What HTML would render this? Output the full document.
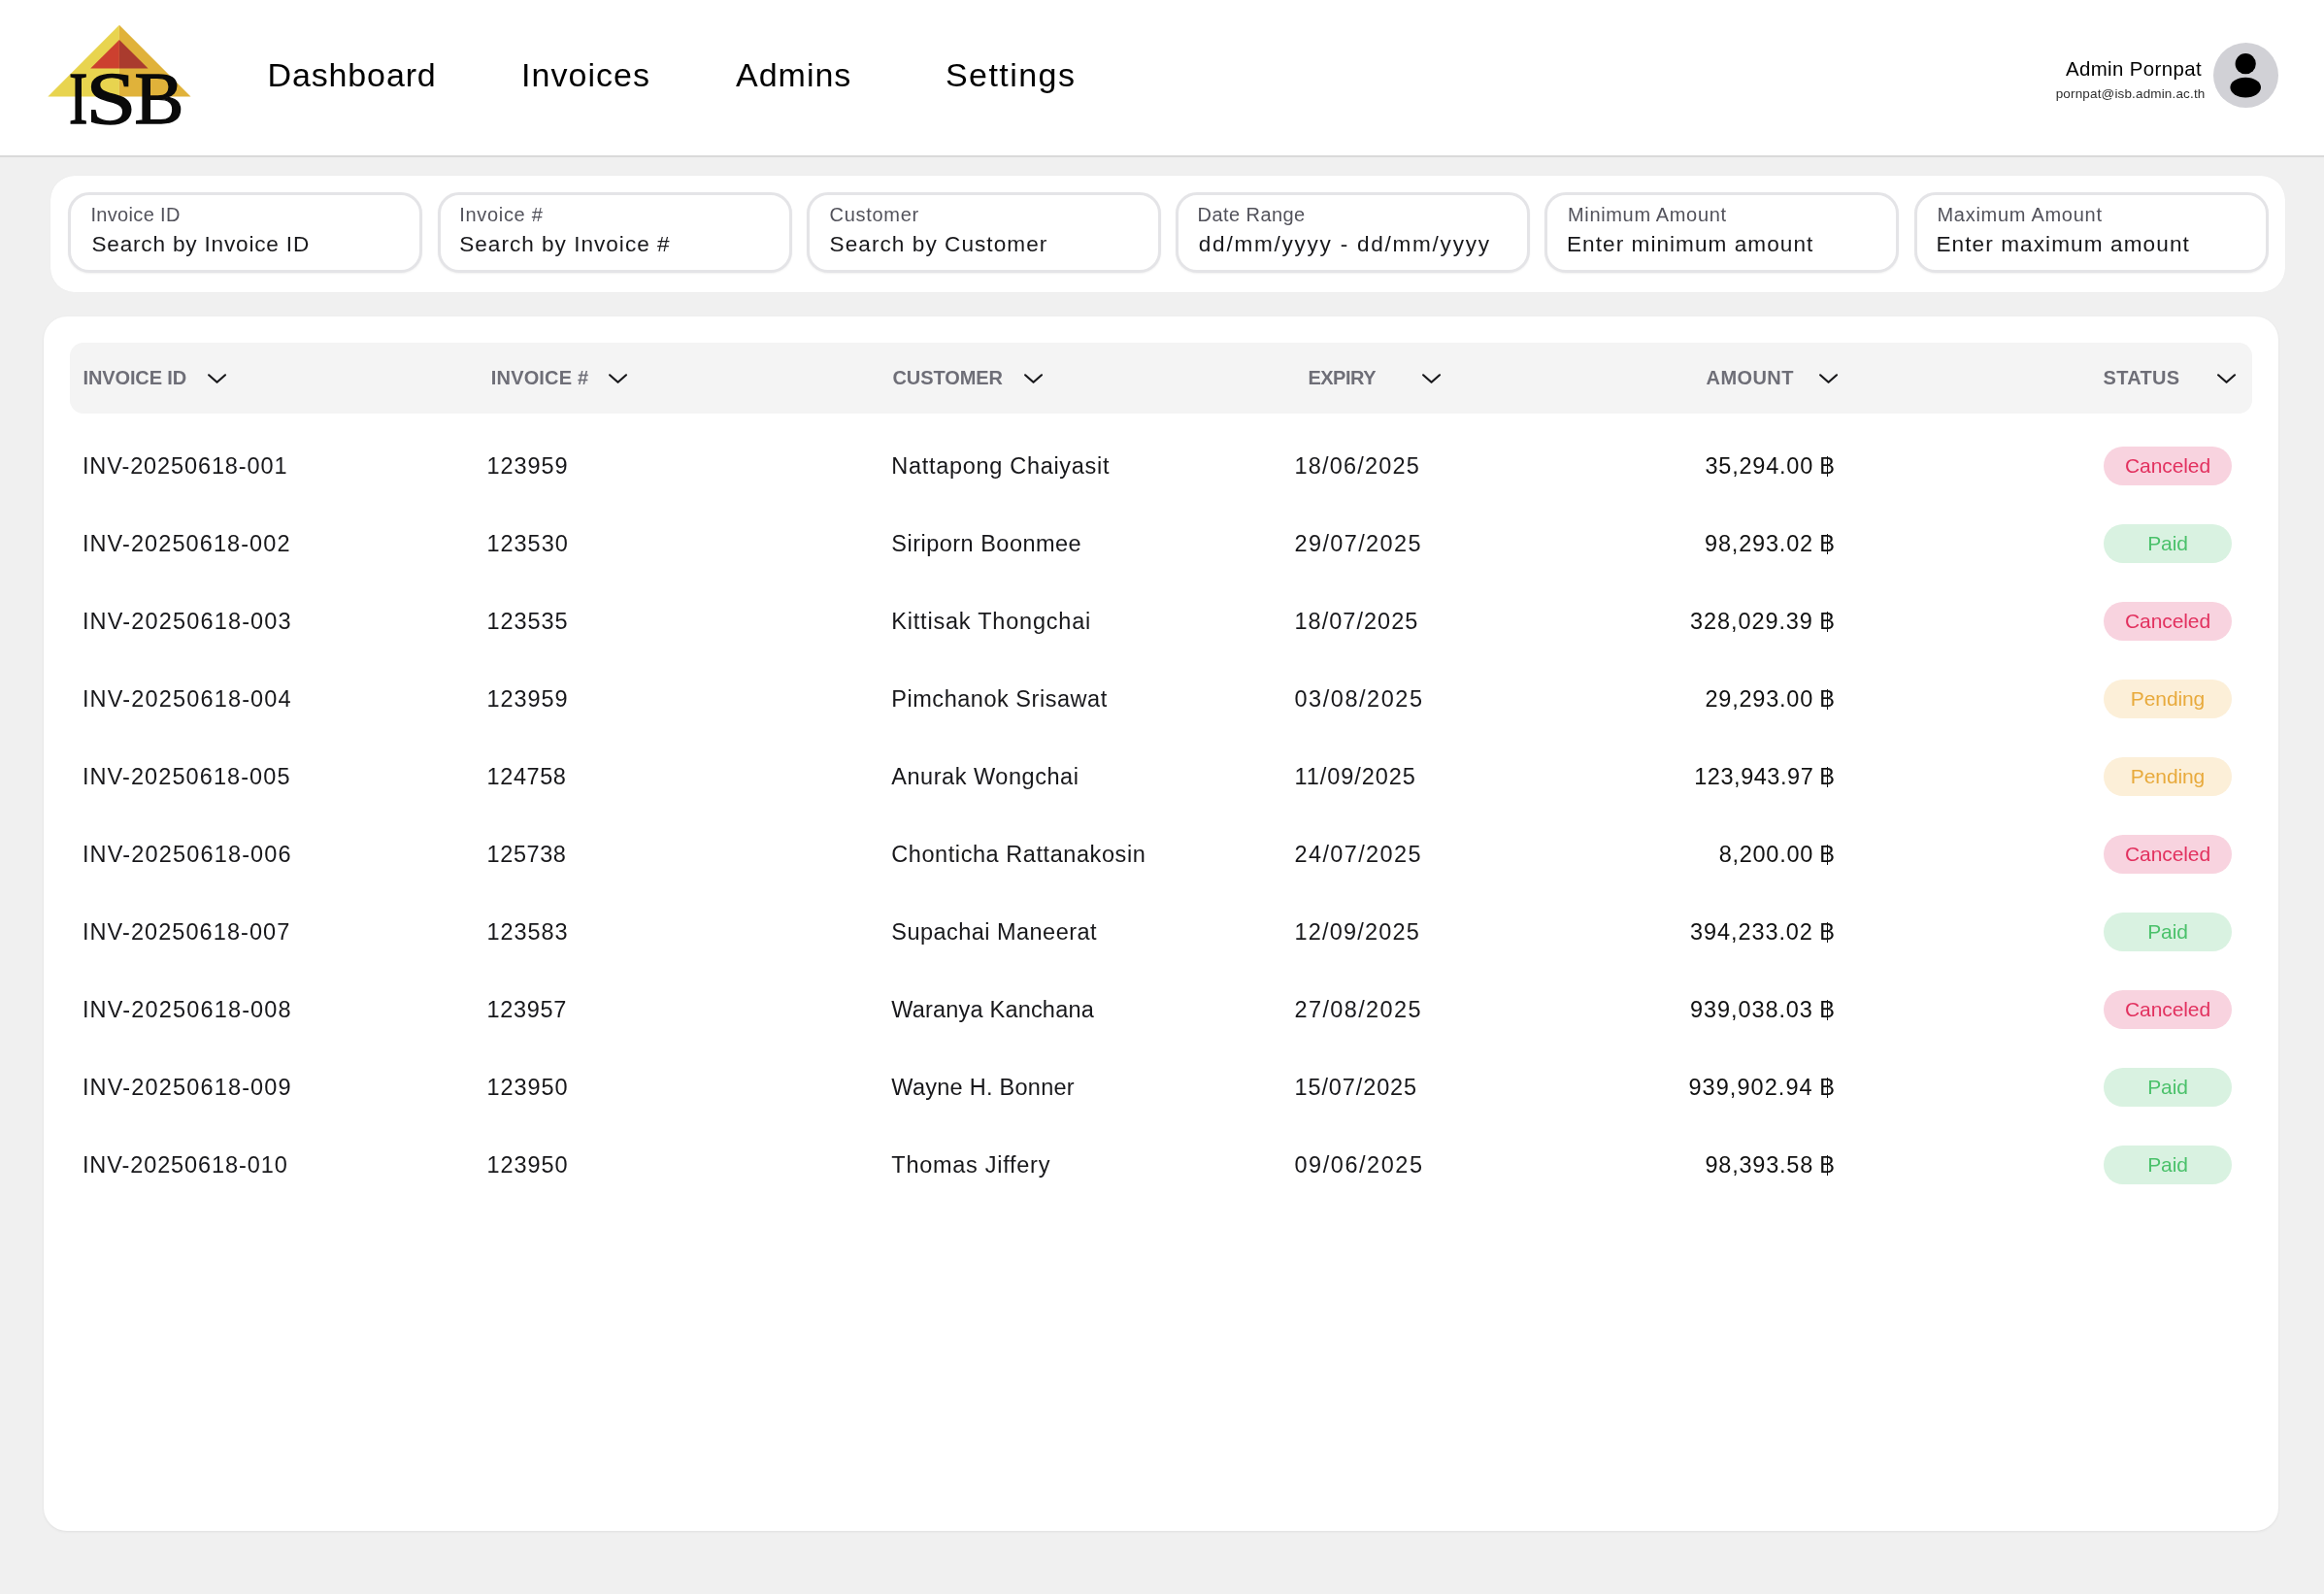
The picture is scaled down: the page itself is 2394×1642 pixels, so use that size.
<!DOCTYPE html>
<html>
<head>
<meta charset="utf-8">
<style>
*{margin:0;padding:0;box-sizing:border-box;}
html,body{width:2394px;height:1642px;overflow:hidden;background:#f0f0f0;font-family:"Liberation Sans",sans-serif;}
body{will-change:transform;}
.abs{position:absolute;white-space:nowrap;}
#hdr{position:absolute;left:0;top:0;width:2394px;height:162px;background:#fff;border-bottom:2px solid #dadada;}
.nav{position:absolute;top:57px;font-size:34px;line-height:40px;letter-spacing:1.2px;color:#000;white-space:nowrap;}
#uname{position:absolute;right:126.00000000000009px;top:59px;font-size:20.4px;line-height:24px;letter-spacing:0.4px;color:#000;white-space:nowrap;}
#umail{position:absolute;right:122.54999999999981px;top:89px;font-size:13.5px;line-height:16px;letter-spacing:0.15px;color:#2e2e2e;white-space:nowrap;}
#avatar{position:absolute;left:2280px;top:44px;width:67px;height:67px;border-radius:50%;background:#d1d1d6;}
#filters{position:absolute;left:52px;top:181px;width:2302px;height:120px;background:#fff;border-radius:25px;box-shadow:0 0 1px rgba(0,0,0,0.08);}
.inp{position:absolute;top:198px;height:83px;width:365px;border:3px solid #e4e4e7;border-radius:22px;background:#fff;box-shadow:0 1px 2px rgba(0,0,0,0.06);}
.lbl{position:absolute;left:21px;top:8.3px;font-size:20px;line-height:24px;letter-spacing:0.27px;color:#52525b;white-space:nowrap;}
.val{position:absolute;left:21px;top:37px;font-size:22.6px;line-height:28px;letter-spacing:0.82px;color:#18181b;white-space:nowrap;}
#table{position:absolute;left:45px;top:326px;width:2302px;height:1251px;background:#fff;border-radius:24px;box-shadow:0 1px 3px rgba(0,0,0,0.07);}
#thead{position:absolute;left:72px;top:353px;width:2248px;height:73px;background:#f4f4f4;border-radius:14px;}
.th{position:absolute;top:377px;font-size:20px;line-height:24px;letter-spacing:-0.23px;font-weight:bold;color:#6e6e77;white-space:nowrap;}
.chev{position:absolute;top:384px;width:21px;height:13px;}
.td{position:absolute;font-size:23.5px;line-height:28px;letter-spacing:0.74px;color:#18181b;white-space:nowrap;}
.dt{letter-spacing:1.18px;}
.amt{position:absolute;font-size:23.5px;line-height:28px;letter-spacing:0.74px;color:#111;white-space:nowrap;text-align:right;}
.bt{position:relative;display:inline-block;letter-spacing:0;margin-left:-1px;}
.bt:after{content:"";position:absolute;left:7.3px;top:3.5px;width:1.7px;height:21px;background:#111;}
.badge{position:absolute;left:2167px;width:132px;height:40px;border-radius:20px;font-size:21px;line-height:40px;letter-spacing:-0.1px;text-align:center;white-space:nowrap;}
.c{background:#f8d3df;color:#e2315f;}
.p{background:#d9f2e1;color:#4bc16b;}
.g{background:#fcefd8;color:#e8aa3c;}
</style>
</head>
<body>
<div id="hdr"></div>
<svg class="abs" style="left:0;top:0" width="220" height="140" viewBox="0 0 220 140">
<polygon points="122.9,25.8 49.3,99.4 122.9,99.4" fill="#e8d44f"/>
<polygon points="122.9,25.8 196.5,99.4 122.9,99.4" fill="#e0b23a"/>
<polygon points="122.9,41 93.2,70.4 122.9,70.4" fill="#cc402f"/>
<polygon points="122.9,41 152.6,70.4 122.9,70.4" fill="#aa3b2e"/>
<g font-family="Liberation Serif" font-size="78.5" fill="#0a0a0a" stroke="#0a0a0a" stroke-width="1.5">
<text transform="translate(70.95,127.0) scale(0.74,0.97)">I</text>
<text transform="translate(88.6,127.0) scale(1.19,0.97)">S</text>
<text transform="translate(138.56,127.0) scale(0.97,0.97)">B</text>
</g></svg>
<div class="nav" id="n1" style="left:275.6px;letter-spacing:0.85px">Dashboard</div>
<div class="nav" id="n2" style="left:537px;letter-spacing:1.03px">Invoices</div>
<div class="nav" id="n3" style="left:758px;letter-spacing:1.0px">Admins</div>
<div class="nav" id="n4" style="left:974px;letter-spacing:1.44px">Settings</div>
<div id="uname">Admin Pornpat</div>
<div id="umail">pornpat@isb.admin.ac.th</div>
<div id="avatar"><svg width="67" height="67" viewBox="0 0 67 67"><circle cx="33.2" cy="21.7" r="10.6" fill="#000"/><ellipse cx="33.2" cy="46.1" rx="15.8" ry="10.4" fill="#000"/></svg></div>
<div id="filters"></div>
<div class="inp" style="left:70px"><div class="lbl" id="lb0" style="letter-spacing:0.335px;margin-left:-0.6px">Invoice ID</div><div class="val" id="vl0" style="letter-spacing:0.809px;margin-left:0.4px">Search by Invoice ID</div></div>
<div class="inp" style="left:451px"><div class="lbl" id="lb1" style="letter-spacing:0.695px;margin-left:-1.8px">Invoice #</div><div class="val" id="vl1" style="letter-spacing:0.997px;margin-left:-1.8px">Search by Invoice #</div></div>
<div class="inp" style="left:831px"><div class="lbl" id="lb2" style="letter-spacing:0.699px;margin-left:-0.4px">Customer</div><div class="val" id="vl2" style="letter-spacing:1.044px;margin-left:-0.4px">Search by Customer</div></div>
<div class="inp" style="left:1211px"><div class="lbl" id="lb3" style="letter-spacing:0.423px;margin-left:-1.4px">Date Range</div><div class="val" id="vl3" style="letter-spacing:1.73px;margin-left:-0.2px">dd/mm/yyyy - dd/mm/yyyy</div></div>
<div class="inp" style="left:1591px"><div class="lbl" id="lb4" style="letter-spacing:0.655px;margin-left:0.0px">Minimum Amount</div><div class="val" id="vl4" style="letter-spacing:1.04px;margin-left:-1.0px">Enter minimum amount</div></div>
<div class="inp" style="left:1972px"><div class="lbl" id="lb5" style="letter-spacing:0.732px;margin-left:-0.6px">Maximum Amount</div><div class="val" id="vl5" style="letter-spacing:1.083px;margin-left:-1.6px">Enter maximum amount</div></div>
<div id="table"></div>
<div id="thead"></div>
<div class="th" id="h0" style="left:86px;letter-spacing:-0.139px;margin-left:-0.4px">INVOICE ID</div>
<svg class="chev" id="cv0" style="left:213.2px" viewBox="0 0 21 13"><polyline points="2.1,2.3 10.55,9.8 19,2.3" fill="none" stroke="#18181b" stroke-width="2.2" stroke-linecap="round" stroke-linejoin="round"/></svg>
<div class="th" id="h1" style="left:507px;letter-spacing:0.166px;margin-left:-1.2px">INVOICE #</div>
<svg class="chev" id="cv1" style="left:625.8px" viewBox="0 0 21 13"><polyline points="2.1,2.3 10.55,9.8 19,2.3" fill="none" stroke="#18181b" stroke-width="2.2" stroke-linecap="round" stroke-linejoin="round"/></svg>
<div class="th" id="h2" style="left:920.5px;letter-spacing:-0.087px;margin-left:-1.0px">CUSTOMER</div>
<svg class="chev" id="cv2" style="left:1054px" viewBox="0 0 21 13"><polyline points="2.1,2.3 10.55,9.8 19,2.3" fill="none" stroke="#18181b" stroke-width="2.2" stroke-linecap="round" stroke-linejoin="round"/></svg>
<div class="th" id="h3" style="left:1349px;letter-spacing:-0.51px;margin-left:-1.6px">EXPIRY</div>
<svg class="chev" id="cv3" style="left:1463.8px" viewBox="0 0 21 13"><polyline points="2.1,2.3 10.55,9.8 19,2.3" fill="none" stroke="#18181b" stroke-width="2.2" stroke-linecap="round" stroke-linejoin="round"/></svg>
<div class="th" id="h4" style="left:1758px;letter-spacing:0.41px;margin-left:-0.4px">AMOUNT</div>
<svg class="chev" id="cv4" style="left:1873.1px" viewBox="0 0 21 13"><polyline points="2.1,2.3 10.55,9.8 19,2.3" fill="none" stroke="#18181b" stroke-width="2.2" stroke-linecap="round" stroke-linejoin="round"/></svg>
<div class="th" id="h5" style="left:2167.5px;letter-spacing:0.33px;margin-left:-1.0px">STATUS</div>
<svg class="chev" id="cv5" style="left:2282.8px" viewBox="0 0 21 13"><polyline points="2.1,2.3 10.55,9.8 19,2.3" fill="none" stroke="#18181b" stroke-width="2.2" stroke-linecap="round" stroke-linejoin="round"/></svg>
<div class="td" id="r0c0" style="left:84.9px;top:466px;letter-spacing:0.887px">INV-20250618-001</div>
<div class="td" id="r0c1" style="left:501.6px;top:466px;letter-spacing:0.9px">123959</div>
<div class="td" id="r0c2" style="left:918.3px;top:466px;letter-spacing:0.695px">Nattapong Chaiyasit</div>
<div class="td dt" id="r0c3" style="left:1333.5px;top:466px;letter-spacing:1.201px">18/06/2025</div>
<div class="amt" id="amt0" style="right:504px;top:466px;letter-spacing:0.78px">35,294.00 <span class="bt">B</span></div>
<div class="badge c" style="top:460px">Canceled</div>
<div class="td" id="r1c0" style="left:84.9px;top:546px;letter-spacing:1.087px">INV-20250618-002</div>
<div class="td" id="r1c1" style="left:501.6px;top:546px;letter-spacing:0.94px">123530</div>
<div class="td" id="r1c2" style="left:918.3px;top:546px;letter-spacing:0.486px">Siriporn Boonmee</div>
<div class="td dt" id="r1c3" style="left:1333.5px;top:546px;letter-spacing:1.381px">29/07/2025</div>
<div class="amt" id="amt1" style="right:504px;top:546px;letter-spacing:0.82px">98,293.02 <span class="bt">B</span></div>
<div class="badge p" style="top:540px">Paid</div>
<div class="td" id="r2c0" style="left:84.9px;top:626px;letter-spacing:1.165px">INV-20250618-003</div>
<div class="td" id="r2c1" style="left:501.6px;top:626px;letter-spacing:0.9px">123535</div>
<div class="td" id="r2c2" style="left:918.3px;top:626px;letter-spacing:0.786px">Kittisak Thongchai</div>
<div class="td dt" id="r2c3" style="left:1333.5px;top:626px;letter-spacing:1.026px">18/07/2025</div>
<div class="amt" id="amt2" style="right:504px;top:626px;letter-spacing:0.922px">328,029.39 <span class="bt">B</span></div>
<div class="badge c" style="top:620px">Canceled</div>
<div class="td" id="r3c0" style="left:84.9px;top:706px;letter-spacing:1.165px">INV-20250618-004</div>
<div class="td" id="r3c1" style="left:501.6px;top:706px;letter-spacing:0.9px">123959</div>
<div class="td" id="r3c2" style="left:918.3px;top:706px;letter-spacing:0.528px">Pimchanok Srisawat</div>
<div class="td dt" id="r3c3" style="left:1333.5px;top:706px;letter-spacing:1.537px">03/08/2025</div>
<div class="amt" id="amt3" style="right:504px;top:706px;letter-spacing:0.78px">29,293.00 <span class="bt">B</span></div>
<div class="badge g" style="top:700px">Pending</div>
<div class="td" id="r4c0" style="left:84.9px;top:786px;letter-spacing:1.087px">INV-20250618-005</div>
<div class="td" id="r4c1" style="left:501.6px;top:786px;letter-spacing:0.58px">124758</div>
<div class="td" id="r4c2" style="left:918.3px;top:786px;letter-spacing:0.541px">Anurak Wongchai</div>
<div class="td dt" id="r4c3" style="left:1333.5px;top:786px;letter-spacing:0.934px">11/09/2025</div>
<div class="amt" id="amt4" style="right:504px;top:786px;letter-spacing:0.539px">123,943.97 <span class="bt">B</span></div>
<div class="badge g" style="top:780px">Pending</div>
<div class="td" id="r5c0" style="left:84.9px;top:866px;letter-spacing:1.165px">INV-20250618-006</div>
<div class="td" id="r5c1" style="left:501.6px;top:866px;letter-spacing:0.58px">125738</div>
<div class="td" id="r5c2" style="left:918.3px;top:866px;letter-spacing:0.568px">Chonticha Rattanakosin</div>
<div class="td dt" id="r5c3" style="left:1333.5px;top:866px;letter-spacing:1.381px">24/07/2025</div>
<div class="amt" id="amt5" style="right:504px;top:866px;letter-spacing:0.74px">8,200.00 <span class="bt">B</span></div>
<div class="badge c" style="top:860px">Canceled</div>
<div class="td" id="r6c0" style="left:84.9px;top:946px;letter-spacing:1.074px">INV-20250618-007</div>
<div class="td" id="r6c1" style="left:501.6px;top:946px;letter-spacing:0.9px">123583</div>
<div class="td" id="r6c2" style="left:918.3px;top:946px;letter-spacing:0.464px">Supachai Maneerat</div>
<div class="td dt" id="r6c3" style="left:1333.5px;top:946px;letter-spacing:1.201px">12/09/2025</div>
<div class="amt" id="amt6" style="right:504px;top:946px;letter-spacing:0.922px">394,233.02 <span class="bt">B</span></div>
<div class="badge p" style="top:940px">Paid</div>
<div class="td" id="r7c0" style="left:84.9px;top:1026px;letter-spacing:1.165px">INV-20250618-008</div>
<div class="td" id="r7c1" style="left:501.6px;top:1026px;letter-spacing:0.66px">123957</div>
<div class="td" id="r7c2" style="left:918.3px;top:1026px;letter-spacing:0.193px">Waranya Kanchana</div>
<div class="td dt" id="r7c3" style="left:1333.5px;top:1026px;letter-spacing:1.381px">27/08/2025</div>
<div class="amt" id="amt7" style="right:504px;top:1026px;letter-spacing:0.922px">939,038.03 <span class="bt">B</span></div>
<div class="badge c" style="top:1020px">Canceled</div>
<div class="td" id="r8c0" style="left:84.9px;top:1106px;letter-spacing:1.165px">INV-20250618-009</div>
<div class="td" id="r8c1" style="left:501.6px;top:1106px;letter-spacing:0.9px">123950</div>
<div class="td" id="r8c2" style="left:918.3px;top:1106px;letter-spacing:0.27px">Wayne H. Bonner</div>
<div class="td dt" id="r8c3" style="left:1333.5px;top:1106px;letter-spacing:0.892px">15/07/2025</div>
<div class="amt" id="amt8" style="right:504px;top:1106px;letter-spacing:1.069px">939,902.94 <span class="bt">B</span></div>
<div class="badge p" style="top:1100px">Paid</div>
<div class="td" id="r9c0" style="left:84.9px;top:1186px;letter-spacing:0.901px">INV-20250618-010</div>
<div class="td" id="r9c1" style="left:501.6px;top:1186px;letter-spacing:0.9px">123950</div>
<div class="td" id="r9c2" style="left:918.3px;top:1186px;letter-spacing:0.727px">Thomas Jiffery</div>
<div class="td dt" id="r9c3" style="left:1333.5px;top:1186px;letter-spacing:1.537px">09/06/2025</div>
<div class="amt" id="amt9" style="right:504px;top:1186px;letter-spacing:0.78px">98,393.58 <span class="bt">B</span></div>
<div class="badge p" style="top:1180px">Paid</div>
</body>
</html>
